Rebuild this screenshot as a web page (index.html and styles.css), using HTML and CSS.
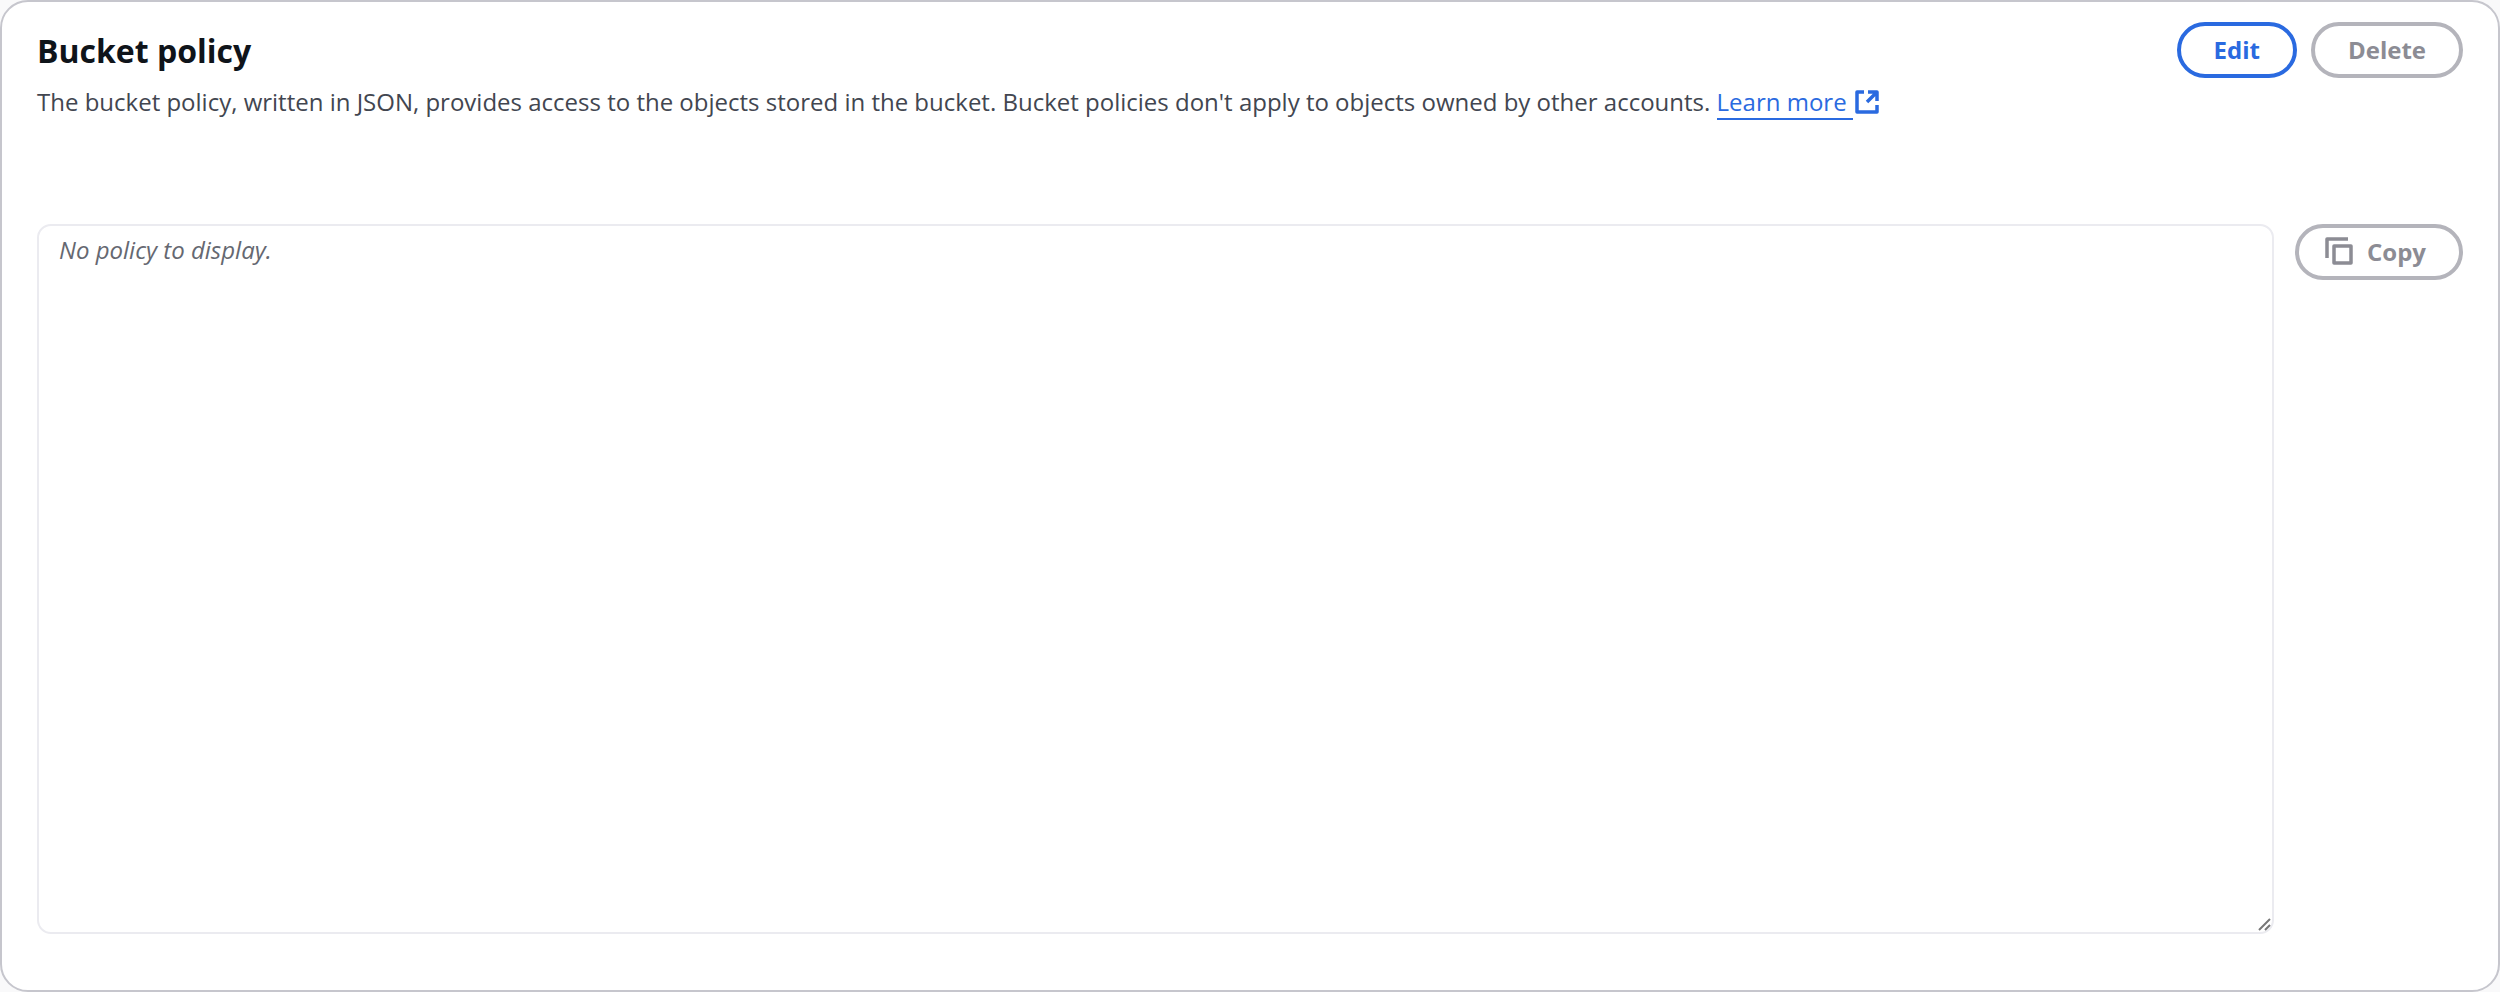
FILE: index.html
```html
<!doctype html>
<html lang="en">
	<head>
		<meta charset="UTF-8">
		<title>Bucket policy</title>
		<link rel="stylesheet" href="styles.css">
	</head>
	<body>
		<section class="card">
			<header class="header">
				<div class="heading">
					<h2 class="title" id="policy-title">Bucket policy</h2>
					<p class="description">The bucket policy, written in JSON, provides access to the objects stored in the bucket. Bucket policies don't apply to objects owned by other accounts. <a class="link" href="#learn-more"><span class="link-text">Learn more </span><svg class="link-icon" viewBox="0 0 26 26" aria-hidden="true"><path d="M10 3H3v20h20v-7M14 3h9v9M23 3 13 13"/></svg></a></p>
				</div>
				<div class="actions">
					<button type="button" class="btn">Edit</button>
					<button type="button" class="btn" disabled>Delete</button>
				</div>
			</header>
			<div class="policy">
				<textarea class="editor" aria-labelledby="policy-title" placeholder="No policy to display." readonly></textarea>
				<button type="button" class="btn btn-copy" disabled>
					<svg class="copy-icon" viewBox="0 0 28 28" aria-hidden="true"><path d="M2 21V2h21M9 9h17v17H9z"/></svg>
					Copy
				</button>
			</div>
		</section>
	</body>
</html>
```

FILE: styles.css
```css
*{box-sizing:border-box;}
body{
	margin:0;
	background:#f9f9fa;
	font-family:"Open Sans","Noto Sans",sans-serif;
	font-size:24px;
	font-weight:500;
	line-height:32px;
	color:#424650;
}
.card{
	min-height:100vh;
	padding:20px 35px;
	background:#fff;
	border:2px solid #c6c6cd;
	border-radius:28px;
}
.header{
	display:flex;
	justify-content:space-between;
	align-items:flex-start;
	gap:24px;
}
.title{
	margin:9px 0 15px;
	font-size:32px;
	font-weight:bold;
	line-height:40px;
	color:#0f141a;
}
.description{margin:0;}
.link{
	color:#2a6ae0;
	text-decoration:none;
	white-space:nowrap;
}
.link-text{
	border-bottom:2px solid #2a6ae0;
	white-space:pre;
}
.link-icon{
	width:26px;height:26px;
	margin-left:1px;
	vertical-align:-4px;
	fill:none;
	stroke:#2a6ae0;
	stroke-width:3.5;
	stroke-linejoin:round;
}
.actions{
	display:flex;
	flex-shrink:0;
	gap:14px;
}
.btn{
	display:inline-flex;
	align-items:center;
	height:56px;
	padding:0 33px 2px;
	border:4px solid #2a6ae0;
	border-radius:28px;
	background:#fff;
	color:#2a6ae0;
	font:bold 24px "Open Sans","Noto Sans",sans-serif;
	cursor:pointer;
}
.btn:disabled{
	border-color:#b4b4bb;
	color:#8c8c94;
	cursor:default;
}
.btn-copy{
	flex-shrink:0;
	gap:14px;
	padding-left:26px;
}
.copy-icon{
	width:28px;height:28px;
	fill:none;
	stroke:#8c8c94;
	stroke-width:3.5;
	stroke-linejoin:round;
}
.policy{
	display:flex;
	align-items:flex-start;
	gap:21px;
	margin-top:106px;
}
.editor{
	flex:1;
	height:710px;
	padding:8px 20px;
	border:2px solid #ebebf0;
	border-radius:14px;
	outline:0;
	background:#fff;
	font:500 24px/32px "Open Sans","Noto Sans",sans-serif;
	resize:vertical;
}
.editor::placeholder{
	color:#656871;
	font-style:italic;
}
.editor::-webkit-resizer{
	background:url("data:image/svg+xml,%3Csvg xmlns='http://www.w3.org/2000/svg' width='15' height='15'%3E%3Cpath d='M2 13 13 2M8 13l5-5' stroke='%23777' stroke-width='2'/%3E%3C/svg%3E") right bottom no-repeat;
}
```
